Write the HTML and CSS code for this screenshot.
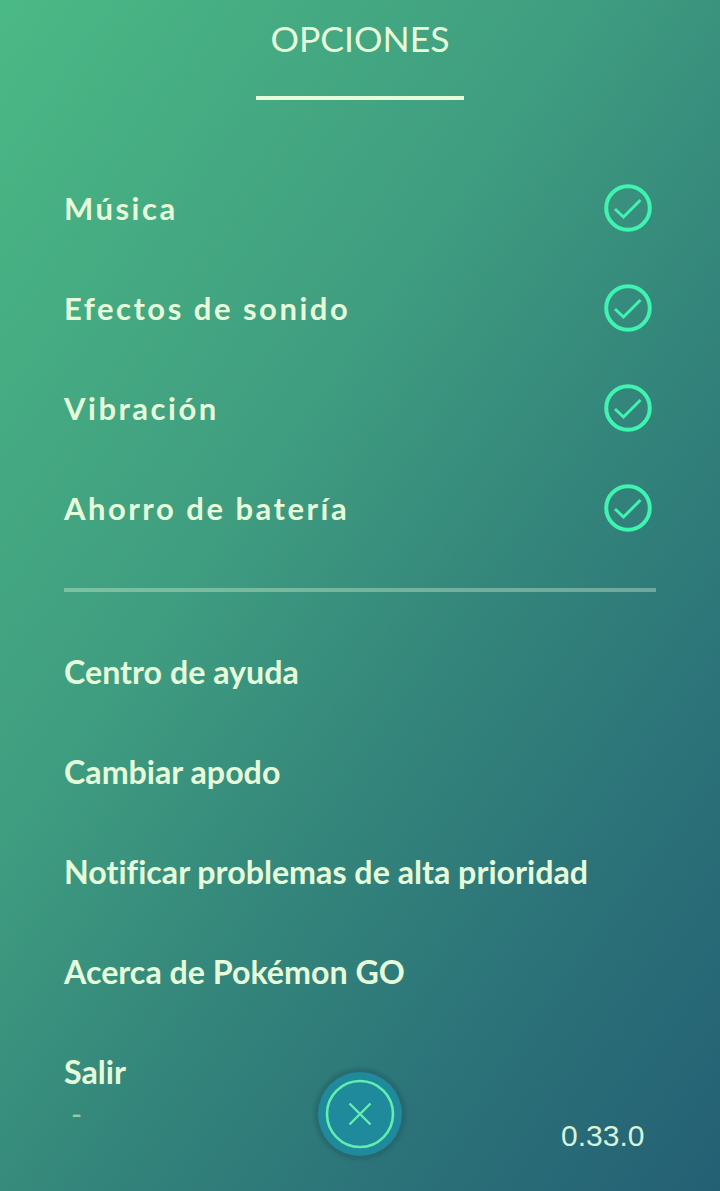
FILE: index.html
```html
<!DOCTYPE html>
<html lang="es">
<head>
    <meta charset="UTF-8">
    <meta name="viewport" content="width=device-width, initial-scale=1.0">
    <title>Opciones</title>
    <link rel="stylesheet" href="styles.css">
</head>
<body>
 <div class="main-container">
  <h1 class="title">OPCIONES</h1>
  <div class="title-line"></div>

  <div class="toggle-list">
   <div class="toggle-row">
    <span>Música</span>
    <svg class="check" viewBox="0 0 48 48"><circle cx="24" cy="24" r="21.8"/><path d="M11 25 L19.5 33 L36.5 16"/></svg>
   </div>
   <div class="toggle-row">
    <span>Efectos de sonido</span>
    <svg class="check" viewBox="0 0 48 48"><circle cx="24" cy="24" r="21.8"/><path d="M11 25 L19.5 33 L36.5 16"/></svg>
   </div>
   <div class="toggle-row">
    <span>Vibración</span>
    <svg class="check" viewBox="0 0 48 48"><circle cx="24" cy="24" r="21.8"/><path d="M11 25 L19.5 33 L36.5 16"/></svg>
   </div>
   <div class="toggle-row">
    <span>Ahorro de batería</span>
    <svg class="check" viewBox="0 0 48 48"><circle cx="24" cy="24" r="21.8"/><path d="M11 25 L19.5 33 L36.5 16"/></svg>
   </div>
  </div>

  <div class="divider"></div>

  <div class="link-list">
   <div class="link-row">Centro de ayuda</div>
   <div class="link-row">Cambiar apodo</div>
   <div class="link-row">Notificar problemas de alta prioridad</div>
   <div class="link-row">Acerca de Pokémon GO</div>
   <div class="link-row">Salir</div>
  </div>

  <span class="dash">-</span>
  <button class="close-button">
   <svg viewBox="0 0 70 70"><circle cx="35" cy="35" r="33"/><path d="M24.5 24.5 L45.5 45.5 M45.5 24.5 L24.5 45.5"/></svg>
  </button>
  <span class="version">0.33.0</span>
 </div>
</body>
</html>
```
FILE: styles.css
```css
body {
    margin: 0;
    font-family: Lato, sans-serif;
    color: #e6fbd9;
}
.main-container {
    position: relative;
    width: 720px;
    height: 1191px;
    overflow: hidden;
    background: linear-gradient(125deg, #4bb985 0%, #3f9d80 38%, #34867b 58%, #2c7479 76%, #246074 100%);
}
.title {
    margin: 0;
    padding-top: 18px;
    height: 42px;
    line-height: 42px;
    font-size: 35.6px;
    font-weight: 400;
    text-align: center;
}
.title-line {
    width: 208px;
    height: 4px;
    margin: 36px auto 0;
    background: #e6fbd9;
}
.toggle-list {
    margin-top: 58px;
    padding: 0 68px 0 64px;
}
.toggle-row {
    height: 100px;
    display: flex;
    align-items: center;
    justify-content: space-between;
    font-size: 31px;
    font-weight: 700;
    letter-spacing: 2.5px;
}
.check {
    width: 48px;
    height: 48px;
}
.check circle, .check path {
    fill: none;
    stroke: #3ff3b0;
    stroke-width: 4;
}
.check path {
    stroke-width: 3;
}
.divider {
    height: 4px;
    margin: 30px 64px 0;
    background: rgba(230, 251, 217, 0.35);
}
.link-list {
    margin-top: 30px;
    padding-left: 64px;
}
.link-row {
    height: 100px;
    line-height: 100px;
    font-size: 32.2px;
    font-weight: 700;
    font-variant-ligatures: none;
}
.dash {
    position: absolute;
    left: 71px;
    top: 1098px;
    font-size: 30px;
    line-height: 30px;
    opacity: 0.55;
}
/* el halo oscuro alrededor del boton es difuso en la captura */
.close-button {
    position: absolute;
    left: 318px;
    top: 1072px;
    width: 84px;
    height: 84px;
    padding: 0;
    display: flex;
    align-items: center;
    justify-content: center;
    border: none;
    border-radius: 50%;
    background: #1f8a9b;
    box-shadow: 0 0 3px 4px rgba(36, 88, 100, 0.45);
}
.close-button svg {
    width: 70px;
    height: 70px;
}
.close-button circle {
    fill: none;
    stroke: #63eeb0;
    stroke-width: 2.6;
}
.close-button path {
    fill: none;
    stroke: #63eeb0;
    stroke-width: 2.4;
}
.version {
    position: absolute;
    left: 561px;
    top: 1119px;
    font-family: "Liberation Sans", sans-serif;
    font-size: 30px;
    line-height: 34px;
    color: #d6f3dc;
}
```
